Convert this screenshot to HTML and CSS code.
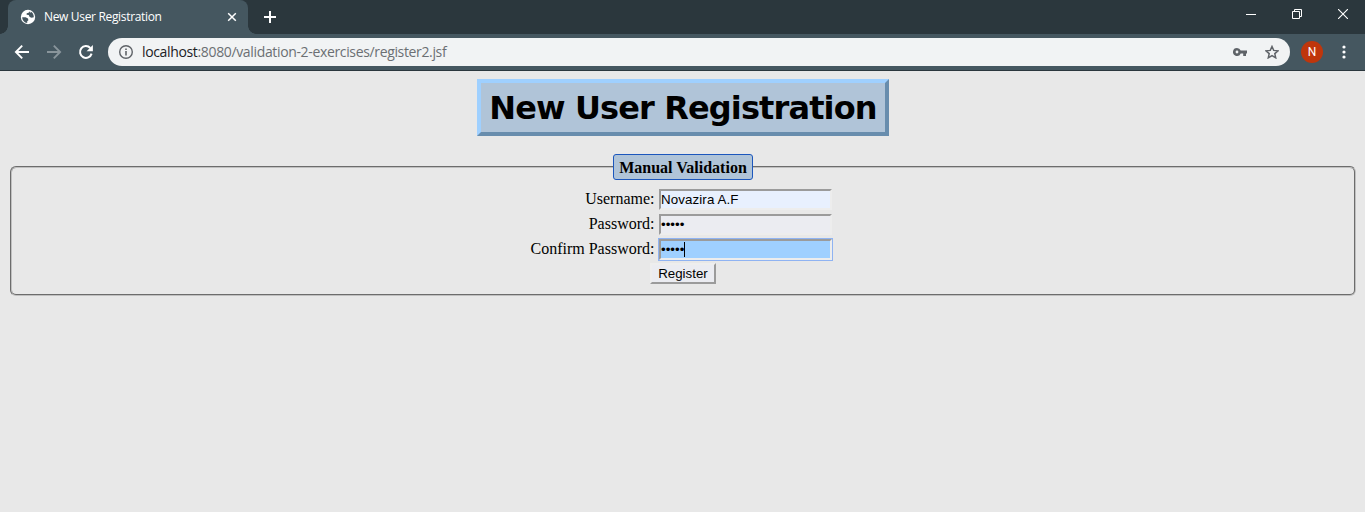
FILE: index.html
```html
<!DOCTYPE html>
<html lang="en">
<head>
<meta charset="utf-8">
<title>New User Registration</title>
<link rel="stylesheet" href="styles.css">
</head>
<body>
<header class="browser">
  <div class="tabstrip">
    <div class="tab">
      <svg class="globe" width="16" height="16" viewBox="0 0 16 16"><circle cx="8" cy="8" r="7.200" fill="#fff"/><path d="M2.200 8.200H5.600L8 9.400 8.400 11.200 7.200 12.200V14C4.300 13.600 2.200 11.200 2.200 8.200zM9.200 2.200L8.700 3.700 6.700 4.300 6.600 5.700 8.700 6 9.700 8 11.600 8.800 13.800 8.200C13.900 5.700 12.600 3.700 10.800 2.800L10.300 3.900z" fill="#455760"/></svg>
      <span class="tab-title">New User Registration</span>
      <svg class="tab-close" width="10" height="10" viewBox="0 0 10 10"><path d="M1.200 1.200l7.600 7.600M8.800 1.200L1.200 8.800" stroke="#fff" stroke-width="1.500"/></svg>
    </div>
    <svg class="new-tab" width="12" height="12" viewBox="0 0 12 12"><path d="M6 0v12M0 6h12" stroke="#fff" stroke-width="2"/></svg>
    <div class="window-buttons">
      <svg width="10" height="10" viewBox="0 0 10 10"><path d="M0 5.500h10" stroke="#fff"/></svg>
      <svg width="10" height="10" viewBox="0 0 10 10"><path d="M.5 2.500h7v7h-7zM2.500 2.500v-2h7v7h-2" fill="none" stroke="#fff"/></svg>
      <svg width="10" height="10" viewBox="0 0 10 10"><path d="M0 0l10 10M10 0L0 10" stroke="#fff" stroke-width="1.100"/></svg>
    </div>
  </div>
  <div class="toolbar">
    <svg class="nav" width="16" height="16" viewBox="0 0 16 16"><path d="M15 8H2M8.200 1.700L1.900 8l6.300 6.300" fill="none" stroke="#fff" stroke-width="1.900"/></svg>
    <svg class="nav" width="16" height="16" viewBox="0 0 16 16"><path d="M1 8h13M7.800 1.700L14.100 8l-6.300 6.300" fill="none" stroke="#89959b" stroke-width="1.900"/></svg>
    <svg class="nav" width="16" height="16" viewBox="0 0 16 16"><path d="M13.600 9.600A5.900 5.900 0 1 1 12.300 4" fill="none" stroke="#fff" stroke-width="2"/><path d="M14.900 1v6.300H8.600z" fill="#fff"/></svg>
    <div class="address">
      <svg width="14" height="14" viewBox="0 0 14 14"><circle cx="7" cy="7" r="6.300" fill="none" stroke="#5f6368" stroke-width="1.400"/><path d="M7 6.100v4.300M7 3.400v1.500" stroke="#5f6368" stroke-width="1.600"/></svg>
      <span class="url"><span class="host">localhost</span>:8080/validation-2-exercises/register2.jsf</span>
      <svg class="key" width="14" height="10" viewBox="0 0 14 10"><path fill-rule="evenodd" d="M4 1a4 4 0 0 1 3.700 2.600H14v2.800h-1V9h-2.800V6.400H7.700A4 4 0 1 1 4 1zM4 3.600a1.400 1.400 0 1 0 0 2.800 1.400 1.400 0 0 0 0-2.800z" fill="#5f6368"/></svg>
      <svg class="star" width="14" height="14" viewBox="0 0 14 14"><path d="M7 1.500l1.700 3.900 4.300.4-3.200 2.800.9 4.200L7 10.600l-3.700 2.200.9-4.200L1 5.800l4.300-.4z" fill="none" stroke="#5f6368" stroke-width="1.500"/></svg>
    </div>
    <span class="avatar">N</span>
    <svg class="menu" width="4" height="14" viewBox="0 0 4 14"><g fill="#fff"><circle cx="2" cy="2" r="1.600"/><circle cx="2" cy="7" r="1.600"/><circle cx="2" cy="12" r="1.600"/></g></svg>
  </div>
</header>
<main class="page">
  <h1 class="heading"><span class="heading-text">New User Registration</span></h1>
  <fieldset class="panel">
    <legend class="legend"><span class="legend-text">Manual Validation</span></legend>
    <form class="form">
      <div class="row"><span class="label">Username:</span><div class="field filled">Novazira A.F</div></div>
      <div class="row"><span class="label">Password:</span><div class="field dots">•••••</div></div>
      <div class="row"><span class="label">Confirm Password:</span><div class="field dots focused">•••••<i class="caret"></i></div></div>
      <button class="register" type="button">Register</button>
    </form>
  </fieldset>
</main>
</body>
</html>
```
FILE: styles.css
```css
* { box-sizing: border-box; }
body { margin: 0; height: 512px; overflow: hidden; background: #e8e8e8; font: 16px "Liberation Serif", serif; color: #000; }
svg { display: block; flex: none; }
.browser { font-family: "Open Sans", sans-serif; }
.tabstrip { display: flex; height: 34px; background: #2b373d; padding-left: 8px; }
.tab { position: relative; display: flex; align-items: center; width: 240px; height: 34px; padding: 0 11px 0 12px; background: #455760; border-radius: 8px 8px 0 0; color: #fff; }
.tab::before, .tab::after { content: ""; position: absolute; bottom: 0; width: 8px; height: 8px; }
.tab::before { left: -8px; background: radial-gradient(circle at 0 0, #2b373d 7.500px, #455760 8px); }
.tab::after { right: -8px; background: radial-gradient(circle at 100% 0, #2b373d 7.500px, #455760 8px); }
.tab-title { flex: 1; margin-left: 8px; font-size: 12px; line-height: 16px; white-space: nowrap; letter-spacing: -.33px; }
.new-tab { margin: 11px 0 0 16px; }
.window-buttons { display: flex; gap: 36px; margin: 9px 17px 0 auto; }
.toolbar { display: flex; align-items: center; height: 37px; padding: 0 19px 0 14px; background: #455760; border-bottom: 1px solid #2b373d; }
.nav { margin-right: 16px; }
.address { display: flex; align-items: center; width: 1182px; height: 28px; margin-left: -2px; padding: 0 11px; border-radius: 14px; background: #f1f3f4; }
.url { margin-left: 9px; color: #6b6f73; font-size: 14px; line-height: 20px; letter-spacing: -.35px; white-space: nowrap; }
.host { color: #202124; }
.key { margin-left: auto; }
.star { margin-left: 18px; }
.avatar { width: 22px; height: 22px; margin-left: 11px; border-radius: 50%; background: #bf360c; color: #fff; font: 12px/22px Roboto, sans-serif; text-align: center; }
.menu { margin-left: auto; }
.page { padding: 8px 9px 0 10px; }
.heading { width: 412px; height: 57px; margin: 0 auto 18px; border: 4px solid; border-color: #9fd0ff #688dad #688dad #9fd0ff; background: #b0c4d8; font: bold 32px/51px "DejaVu Sans", sans-serif; text-align: center; white-space: nowrap; }
.heading-text { letter-spacing: -.88px; }
.panel { height: 142px; margin: 0; padding: 9px 0 0; border: 2px groove #c0c0c0; border-radius: 6px; }
.legend { width: 140px; height: 26px; margin: 0 auto; padding: 0; border: 1px solid #1c57bd; border-radius: 3px; background: #b0c4d8; font-weight: bold; line-height: 25px; text-align: center; white-space: nowrap; }
.form { display: flex; flex-direction: column; gap: 4px; }
.row { display: grid; grid-template-columns: 642.500px 173px; column-gap: 4.500px; height: 21px; }
.label { text-align: right; line-height: 20px; }
.field { display: flex; align-items: center; height: 21px; border: 2px solid; border-color: #9b9b9b #ededed #ededed #9b9b9b; background: #ebecf1; font: 13.330px/17px "Liberation Sans", sans-serif; letter-spacing: .1px; white-space: nowrap; }
.filled { background: #e8f0fe; }
.dots { letter-spacing: 0; }
.focused { background: #9fd0ff; outline: 1px solid #8fb3f2; }
.caret { width: 1px; height: 15px; background: #000; }
.register { width: 66px; height: 21px; margin: -1px 0 0 638px; padding: 0; border: 2px solid; border-color: #eee #9b9b9b #9b9b9b #eee; background: #ebecf1; color: #000; font: 13.330px/17px "Liberation Sans", sans-serif; }
```
